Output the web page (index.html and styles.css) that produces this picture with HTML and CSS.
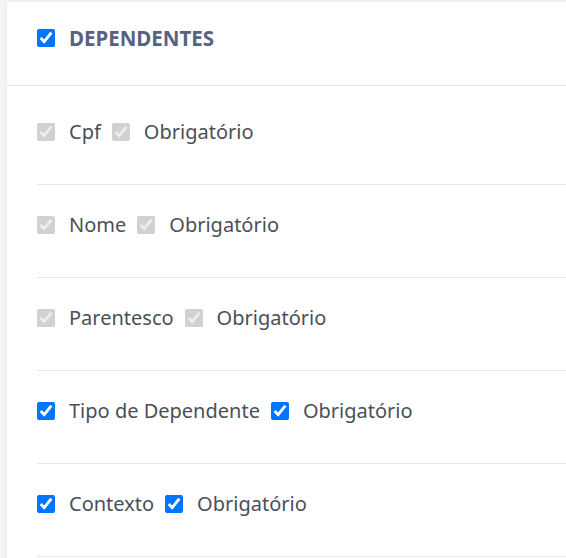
FILE: index.html
```html
<!DOCTYPE html>
<html lang="pt-BR">
<head>
    <meta charset="UTF-8">
    <meta name="viewport" content="width=device-width, initial-scale=1.0">
    <title>Dependentes</title>
    <link rel="stylesheet" href="styles.css">
</head>
<body>
    <section class="card">
        <header class="card-header">
            <label class="check check-title">
                <input type="checkbox" checked>
                <span>DEPENDENTES</span>
            </label>
        </header>
        <ul class="fields">
            <li class="field">
                <label class="check"><input type="checkbox" checked disabled><span>Cpf</span></label>
                <label class="check"><input type="checkbox" checked disabled><span>Obrigatório</span></label>
            </li>
            <li class="field">
                <label class="check"><input type="checkbox" checked disabled><span>Nome</span></label>
                <label class="check"><input type="checkbox" checked disabled><span>Obrigatório</span></label>
            </li>
            <li class="field">
                <label class="check"><input type="checkbox" checked disabled><span>Parentesco</span></label>
                <label class="check"><input type="checkbox" checked disabled><span>Obrigatório</span></label>
            </li>
            <li class="field">
                <label class="check"><input type="checkbox" checked><span>Tipo de Dependente</span></label>
                <label class="check"><input type="checkbox" checked><span>Obrigatório</span></label>
            </li>
            <li class="field">
                <label class="check"><input type="checkbox" checked><span>Contexto</span></label>
                <label class="check"><input type="checkbox" checked><span>Obrigatório</span></label>
            </li>
        </ul>
    </section>
</body>
</html>
```

FILE: styles.css
```css
html{
    box-sizing: border-box;
    font-family: "Noto Sans", "Open Sans", sans-serif;
    font-size: 16px;
}
*,
*::after,
*::before{
    box-sizing: inherit;
}
body{
    margin: 0;
    padding: 2px 0 0 7px;
    background-color: #f5f5f5;
    overflow: hidden;
}
.card{
    background-color: #fff;
    box-shadow: 0 0 6px rgba(0,0,0,.06);
    margin-right: -20px;
    min-height: 600px;
}
.card-header{
    height: 84px;
    padding: 24px 30px 0;
    border-bottom: 1px solid #e4e2ee;
}
.fields{
    list-style: none;
    margin: 0;
    padding: 6px 0 0 30px;
}
.field{
    display: flex;
    gap: 11px;
    padding: 28px 0 40px;
    border-bottom: 1px solid #e6e6e6;
}
.check{
    display: flex;
    align-items: center;
    gap: 14px;
    font-size: 20px;
    line-height: 24px;
    color: #495057;
}
.check input{
    width: 18px;
    height: 18px;
    margin: 0;
}
.check-title{
    font-size: 20.5px;
    font-weight: bold;
    color: #586180;
}
```
